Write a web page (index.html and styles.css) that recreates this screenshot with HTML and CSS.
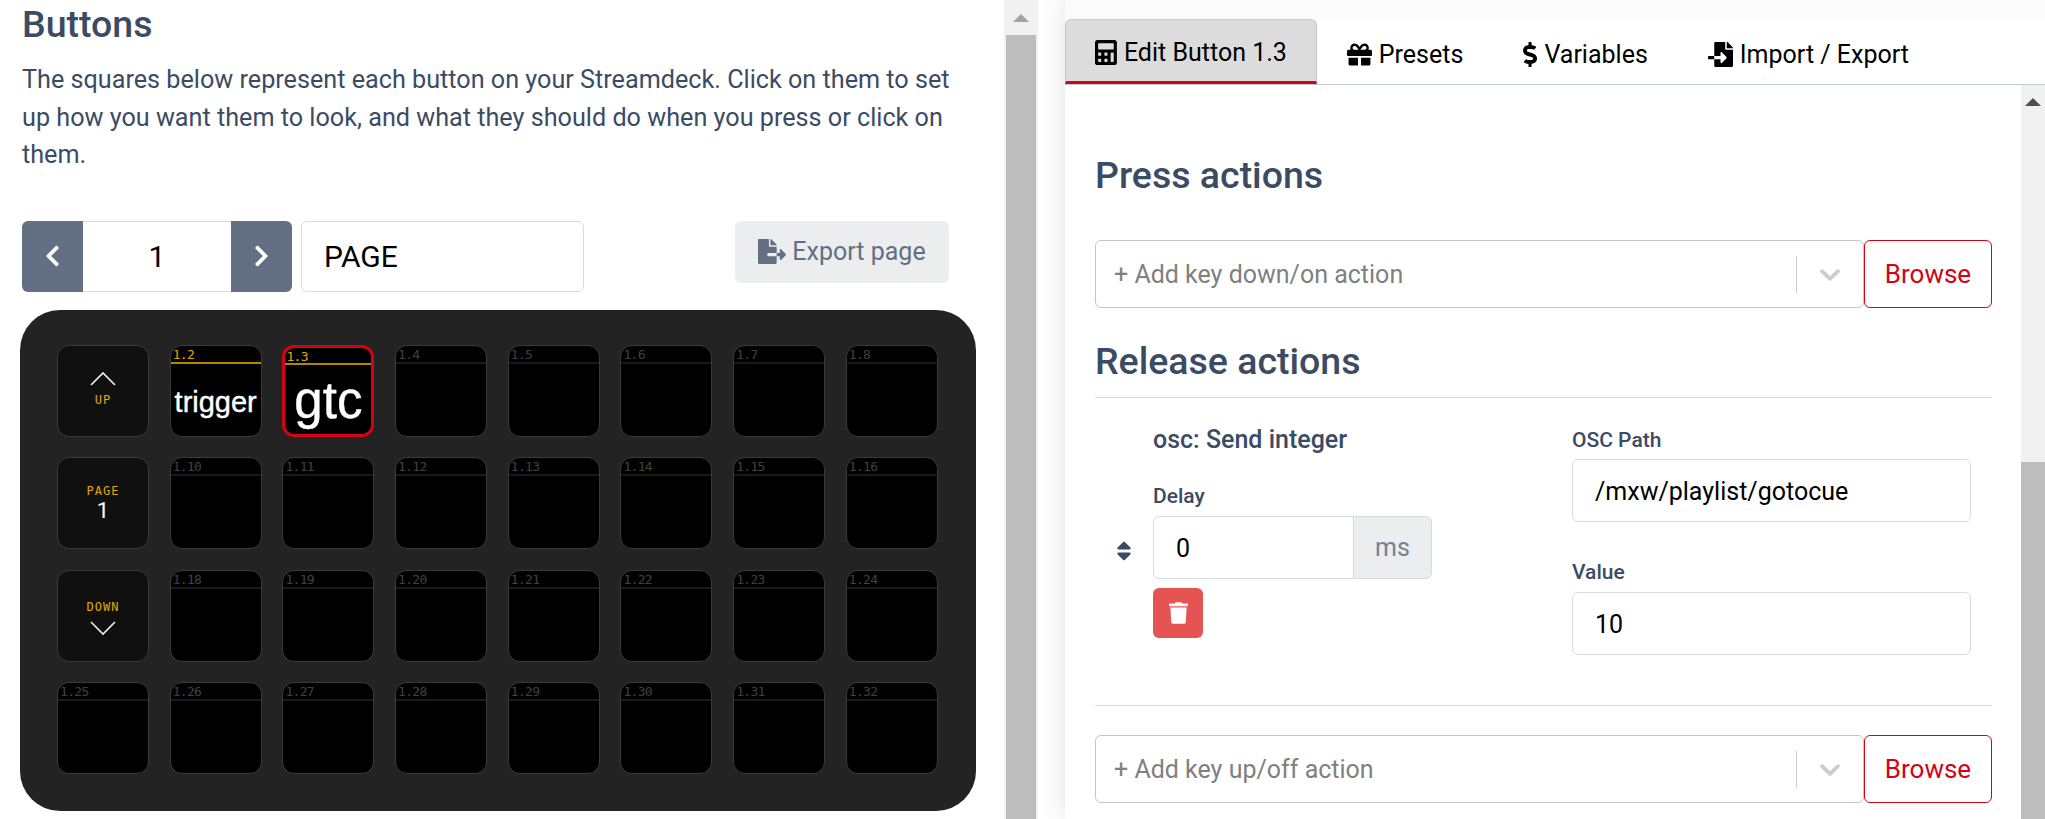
FILE: index.html
```html
<!DOCTYPE html>
<html lang="en">
  <head>
    <meta charset="UTF-8" />
    <title>Buttons</title>
    <link rel="stylesheet" href="styles.css">
  </head>

  <body>
    <section class="left">
      <h1>Buttons</h1>
      <p class="intro">The squares below represent each button on your Streamdeck. Click on them to set up how you want them to look, and what they should do when you press or click on them.</p>

      <div class="pager">
        <button class="page-btn"><svg viewBox="0 0 320 512"><path d="M34.52 239.03L228.87 44.69c9.37-9.37 24.57-9.37 33.94 0l22.67 22.67c9.36 9.36 9.38 24.52.04 33.9L131.49 256l154.02 154.75c9.34 9.38 9.32 24.54-.04 33.9l-22.67 22.67c-9.37 9.37-24.57 9.37-33.94 0L34.52 272.97c-9.37-9.37-9.37-24.57 0-33.94z"/></svg></button>
        <div class="page-num">1</div>
        <button class="page-btn"><svg viewBox="0 0 320 512"><path d="M285.476 272.971L91.132 467.314c-9.373 9.373-24.569 9.373-33.941 0l-22.667-22.667c-9.357-9.357-9.375-24.522-.04-33.901L188.505 256 34.484 101.255c-9.335-9.379-9.317-24.544.04-33.901l22.667-22.667c9.373-9.373 24.569-9.373 33.941 0L285.475 239.03c9.373 9.372 9.373 24.568.001 33.941z"/></svg></button>
        <div class="page-name">PAGE</div>
        <button class="export-btn"><svg viewBox="0 0 576 512"><path d="M384 121.9c0-6.3-2.5-12.4-7-16.9L279.1 7c-4.5-4.5-10.6-7-17-7H256v128h128zM571 308l-95.7-96.4c-10.1-10.1-27.4-3-27.4 11.3V288h-64v64h64v65.2c0 14.3 17.3 21.4 27.4 11.3L571 332c6.6-6.6 6.6-17.4 0-24zm-379 28v-32c0-8.8 7.2-16 16-16h176V160H248c-13.2 0-24-10.8-24-24V0H24C10.7 0 0 10.7 0 24v464c0 13.3 10.7 24 24 24h336c13.3 0 24-10.7 24-24V352H208c-8.8 0-16-7.2-16-16z"/></svg>Export page</button>
      </div>

      <div class="deck">
        <div class="key nav nav-up"><svg class="nav-arrow" viewBox="0 0 26 16"><polyline points="1,14 13,2 25,14"/></svg><span class="nav-label">UP</span></div>
        <div class="key on"><div class="key-head">1.2</div><div class="key-face trigger">trigger</div></div>
        <div class="key on selected"><div class="key-head">1.3</div><div class="key-face gtc">gtc</div></div>
        <div class="key"><div class="key-head">1.4</div></div>
        <div class="key"><div class="key-head">1.5</div></div>
        <div class="key"><div class="key-head">1.6</div></div>
        <div class="key"><div class="key-head">1.7</div></div>
        <div class="key"><div class="key-head">1.8</div></div>

        <div class="key nav"><span class="nav-label">PAGE</span><span class="nav-num">1</span></div>
        <div class="key"><div class="key-head">1.10</div></div>
        <div class="key"><div class="key-head">1.11</div></div>
        <div class="key"><div class="key-head">1.12</div></div>
        <div class="key"><div class="key-head">1.13</div></div>
        <div class="key"><div class="key-head">1.14</div></div>
        <div class="key"><div class="key-head">1.15</div></div>
        <div class="key"><div class="key-head">1.16</div></div>

        <div class="key nav nav-down"><span class="nav-label">DOWN</span><svg class="nav-arrow" viewBox="0 0 26 16"><polyline points="1,2 13,14 25,2"/></svg></div>
        <div class="key"><div class="key-head">1.18</div></div>
        <div class="key"><div class="key-head">1.19</div></div>
        <div class="key"><div class="key-head">1.20</div></div>
        <div class="key"><div class="key-head">1.21</div></div>
        <div class="key"><div class="key-head">1.22</div></div>
        <div class="key"><div class="key-head">1.23</div></div>
        <div class="key"><div class="key-head">1.24</div></div>

        <div class="key"><div class="key-head">1.25</div></div>
        <div class="key"><div class="key-head">1.26</div></div>
        <div class="key"><div class="key-head">1.27</div></div>
        <div class="key"><div class="key-head">1.28</div></div>
        <div class="key"><div class="key-head">1.29</div></div>
        <div class="key"><div class="key-head">1.30</div></div>
        <div class="key"><div class="key-head">1.31</div></div>
        <div class="key"><div class="key-head">1.32</div></div>
      </div>
    </section>

    <div class="scrollbar outer">
      <div class="scroll-up"></div>
      <div class="scroll-thumb"></div>
    </div>

    <section class="right">
      <nav class="tabs">
        <div class="tab active"><svg class="tab-icon" viewBox="0 0 448 512"><path d="M400 0H48C22.4 0 0 22.4 0 48v416c0 25.6 22.4 48 48 48h352c25.6 0 48-22.4 48-48V48c0-25.6-22.4-48-48-48zM128 435.2c0 6.4-6.4 12.8-12.8 12.8H76.8c-6.4 0-12.8-6.4-12.8-12.8v-38.4c0-6.4 6.4-12.8 12.8-12.8h38.4c6.4 0 12.8 6.4 12.8 12.8v38.4zm0-128c0 6.4-6.4 12.8-12.8 12.8H76.8c-6.4 0-12.8-6.4-12.8-12.8v-38.4c0-6.4 6.4-12.8 12.8-12.8h38.4c6.4 0 12.8 6.4 12.8 12.8v38.4zm128 128c0 6.4-6.4 12.8-12.8 12.8h-38.4c-6.4 0-12.8-6.4-12.8-12.8v-38.4c0-6.4 6.4-12.8 12.8-12.8h38.4c6.4 0 12.8 6.4 12.8 12.8v38.4zm0-128c0 6.4-6.4 12.8-12.8 12.8h-38.4c-6.4 0-12.8-6.4-12.8-12.8v-38.4c0-6.4 6.4-12.8 12.8-12.8h38.4c6.4 0 12.8 6.4 12.8 12.8v38.4zm128 128c0 6.4-6.4 12.8-12.8 12.8h-38.4c-6.4 0-12.8-6.4-12.8-12.8V268.8c0-6.4 6.4-12.8 12.8-12.8h38.4c6.4 0 12.8 6.4 12.8 12.8v166.4zm0-256c0 6.4-6.4 12.8-12.8 12.8H76.8c-6.4 0-12.8-6.4-12.8-12.8V76.8C64 70.4 70.4 64 76.8 64h294.4c6.4 0 12.8 6.4 12.8 12.8v102.4z"/></svg>Edit Button 1.3</div>
        <div class="tab"><svg class="tab-icon" viewBox="0 0 512 512"><path d="M32 448c0 17.7 14.3 32 32 32h160V320H32v128zm256 32h160c17.7 0 32-14.3 32-32V320H288v160zm192-320h-42.1c6.2-12.1 10.1-25.5 10.1-40 0-48.5-39.5-88-88-88-41.6 0-68.5 21.3-103 68.3-34.5-47-61.4-68.3-103-68.3-48.5 0-88 39.5-88 88 0 14.5 3.8 27.9 10.1 40H32c-17.7 0-32 14.3-32 32v80c0 8.8 7.2 16 16 16h480c8.8 0 16-7.2 16-16v-80c0-17.7-14.3-32-32-32zm-326.1 0c-22.1 0-40-17.9-40-40s17.9-40 40-40c19.9 0 34.6 3.3 86.1 80h-86.1zm206.1 0h-86.1c51.4-76.5 65.7-80 86.1-80 22.1 0 40 17.9 40 40s-17.9 40-40 40z"/></svg>Presets</div>
        <div class="tab"><svg class="tab-icon" viewBox="0 0 288 512"><path d="M209.2 233.4l-108-31.6C88.7 198.2 80 186.5 80 173.5c0-16.3 13.2-29.5 29.5-29.5h66.3c12.2 0 24.2 3.7 34.2 10.5 6.1 4.1 14.3 3.1 19.5-2l34.8-34c7.1-6.9 6.1-18.4-1.8-24.5C238 74.8 207.4 64.1 176 64V16c0-8.8-7.2-16-16-16h-32c-8.8 0-16 7.2-16 16v48h-2.5C45.8 64-5.4 118.7.5 183.6c4.2 46.1 39.4 83.6 83.8 96.6l102.5 30c12.5 3.7 21.2 15.3 21.2 28.3 0 16.3-13.2 29.5-29.5 29.5h-66.3C100 368 88 364.3 78 357.5c-6.1-4.1-14.3-3.1-19.5 2l-34.8 34c-7.1 6.9-6.1 18.4 1.8 24.5 24.5 19.2 55.1 29.9 86.5 30v48c0 8.8 7.2 16 16 16h32c8.8 0 16-7.2 16-16v-48.2c46.6-.9 90.3-28.6 105.7-72.7 21.5-61.6-14.6-124.8-72.5-141.7z"/></svg>Variables</div>
        <div class="tab"><svg class="tab-icon" viewBox="0 0 512 512"><path d="M16 288c-8.8 0-16 7.2-16 16v32c0 8.8 7.2 16 16 16h112v-64H16zm336-152V0H152c-13.3 0-24 10.7-24 24v264h127.99v-65.18c0-14.28 17.29-21.41 27.36-11.27l95.7 96.43c6.6 6.65 6.6 17.39 0 24.04l-95.7 96.42c-10.06 10.14-27.36 3.01-27.36-11.27V352H128v136c0 13.3 10.7 24 24 24h336c13.3 0 24-10.7 24-24V160H376c-13.2 0-24-10.8-24-24zm153-31L407.1 7c-4.5-4.5-10.6-7-17-7H384v128h128v-6.1c0-6.3-2.5-12.4-7-16.9z"/></svg>Import / Export</div>
      </nav>

      <div class="editor">
        <div class="editor-body">
          <h2 class="press">Press actions</h2>
          <div class="add-row">
            <div class="select">
              <span class="placeholder">+ Add key down/on action</span>
              <span class="select-sep"></span>
              <svg class="select-chevron" viewBox="0 0 20 20"><path d="M4.516 7.548c0.436-0.446 1.043-0.481 1.576 0l3.908 3.747 3.908-3.747c0.533-0.481 1.141-0.446 1.574 0 0.436 0.445 0.408 1.197 0 1.615-0.406 0.418-4.695 4.502-4.695 4.502-0.217 0.223-0.502 0.335-0.787 0.335s-0.57-0.112-0.789-0.335c0 0-4.287-4.084-4.695-4.502s-0.436-1.17 0-1.615z"/></svg>
            </div>
            <button class="browse">Browse</button>
          </div>

          <h2 class="release">Release actions</h2>

          <div class="action">
            <div class="handle"><svg viewBox="0 0 320 512"><path d="M41 288h238c21.4 0 32.1 25.9 17 41L177 448c-9.4 9.4-24.6 9.4-33.9 0L24 329c-15.1-15.1-4.4-41 17-41zm255-105L177 64c-9.4-9.4-24.6-9.4-33.9 0L24 183c-15.1 15.1-4.4 41 17 41h238c21.4 0 32.1-25.9 17-41z"/></svg></div>
            <div class="action-main">
              <div class="action-name">osc: Send integer</div>
              <label class="field-label delay-label">Delay</label>
              <div class="delay-group">
                <div class="input delay-input">0</div>
                <div class="addon">ms</div>
              </div>
              <button class="trash"><svg viewBox="0 0 448 512"><path d="M432 32H312l-9.4-18.7A24 24 0 0 0 281.1 0H166.8a23.72 23.72 0 0 0-21.4 13.3L136 32H16A16 16 0 0 0 0 48v32a16 16 0 0 0 16 16h416a16 16 0 0 0 16-16V48a16 16 0 0 0-16-16zM53.2 467a48 48 0 0 0 47.9 45h245.8a48 48 0 0 0 47.9-45L416 128H32z"/></svg></button>
            </div>
            <div class="action-options">
              <label class="field-label">OSC Path</label>
              <div class="input">/mxw/playlist/gotocue</div>
              <label class="field-label value-label">Value</label>
              <div class="input">10</div>
            </div>
          </div>

          <div class="add-row last">
            <div class="select">
              <span class="placeholder">+ Add key up/off action</span>
              <span class="select-sep"></span>
              <svg class="select-chevron" viewBox="0 0 20 20"><path d="M4.516 7.548c0.436-0.446 1.043-0.481 1.576 0l3.908 3.747 3.908-3.747c0.533-0.481 1.141-0.446 1.574 0 0.436 0.445 0.408 1.197 0 1.615-0.406 0.418-4.695 4.502-4.695 4.502-0.217 0.223-0.502 0.335-0.787 0.335s-0.57-0.112-0.789-0.335c0 0-4.287-4.084-4.695-4.502s-0.436-1.17 0-1.615z"/></svg>
            </div>
            <button class="browse">Browse</button>
          </div>
        </div>

        <div class="scrollbar inner">
          <div class="scroll-up"></div>
          <div class="scroll-thumb"></div>
        </div>
      </div>
    </section>
  </body>
</html>
```

FILE: styles.css
```css
html,
body {
  height: 819px;
  overflow: hidden;
}

body {
  margin: 0;
  display: flex;
  background-color: #fff;
  color: #3c4b64;
  font-family: Roboto, sans-serif;
}

button {
  font-family: inherit;
  border: 0;
  padding: 0;
}

svg {
  display: block;
  fill: currentColor;
}

/* left column */
.left {
  width: 1004px;
  flex-shrink: 0;
  box-sizing: border-box;
  padding: 2px 0 0 22px;
}

h1 {
  font-size: 37.5px;
  font-weight: 500;
  line-height: 44px;
  margin: 0 0 15px;
}

.intro {
  width: 930px;
  margin: 0 0 47px;
  font-size: 25.2px;
  line-height: 37.5px;
}

.pager {
  display: flex;
  align-items: flex-start;
  width: 927px;
}

.page-btn {
  width: 61px;
  height: 71px;
  background-color: #636f83;
  color: #fff;
  display: flex;
  align-items: center;
  justify-content: center;
}

.page-btn:first-child {
  border-radius: 6px 0 0 6px;
}

.page-btn:nth-child(3) {
  border-radius: 0 6px 6px 0;
  margin-right: 9px;
}

.page-btn svg {
  width: 15px;
  height: 24px;
}

.page-num,
.page-name {
  height: 71px;
  box-sizing: border-box;
  border: 1px solid #d8dbe0;
  display: flex;
  align-items: center;
  color: #000;
  font-size: 30px;
}

.page-num {
  width: 148px;
  border-width: 1px 0;
  justify-content: center;
}

.page-name {
  width: 283px;
  border-radius: 6px;
  padding-left: 22px;
}

.export-btn {
  margin-left: auto;
  width: 214px;
  height: 62px;
  background-color: #ebedef;
  color: #636f83;
  border-radius: 6px;
  font-size: 25px;
  display: flex;
  align-items: center;
  justify-content: center;
  gap: 6px;
}

.export-btn svg {
  width: 28px;
  height: 25px;
}

/* stream deck */
.deck {
  width: 956px;
  height: 501px;
  margin: 18px 0 0 -2px;
  box-sizing: border-box;
  padding: 35px 0 0 37px;
  background-color: #232323;
  border-radius: 40px;
  display: grid;
  grid-template-columns: repeat(8, 92px);
  grid-auto-rows: 92px;
  gap: 20.5px 20.7px;
}

.key {
  box-sizing: border-box;
  background-color: #000;
  border: 1px solid #3a3a3a;
  border-radius: 12px;
  overflow: hidden;
}

.key-head {
  height: 16px;
  border-bottom: 2px solid #1a1a1a;
  padding-left: 2px;
  color: #404040;
  font-family: "DejaVu Sans Mono", monospace;
  font-size: 13px;
  line-height: 17px;
  letter-spacing: -0.7px;
}

.key.on .key-head {
  color: #e0a800;
  border-bottom-color: #b38600;
}

.key-face {
  color: #fff;
  font-family: "Liberation Sans", sans-serif;
  text-align: center;
  white-space: nowrap;
  -webkit-text-stroke: 0.4px #fff;
}

.trigger {
  font-size: 29px;
  line-height: 76px;
}

.gtc {
  font-size: 51px;
  line-height: 72px;
}

.key.selected {
  border: 3px solid #d50215;
}

.key.selected .key-head {
  height: 15px;
  padding-left: 1px;
}

.key.nav {
  background-color: #101010;
  display: flex;
  flex-direction: column;
  align-items: center;
  justify-content: center;
  gap: 7px;
}

.key.nav-up {
  padding-bottom: 5px;
}

.key.nav-down {
  padding-top: 5px;
}

.nav-label {
  color: #e0a800;
  font-family: "DejaVu Sans Mono", monospace;
  font-size: 12px;
  line-height: 12px;
  letter-spacing: 1px;
}

.nav-num {
  color: #fff;
  font-size: 22px;
  line-height: 20px;
  margin-top: -3px;
}

.nav-arrow {
  width: 26px;
  height: 16px;
  fill: none;
  stroke: #eee;
  stroke-width: 1.6;
}

/* scrollbars */
.scrollbar {
  flex-shrink: 0;
  background-color: #f1f1f1;
  display: flex;
  flex-direction: column;
}

.scrollbar.outer {
  width: 34px;
}

.scrollbar.inner {
  width: 24px;
}

.scroll-up {
  flex-shrink: 0;
  display: flex;
  justify-content: center;
}

.scroll-up::before {
  content: "";
  width: 0;
  height: 0;
  border-left: 8px solid transparent;
  border-right: 8px solid transparent;
  border-bottom: 8px solid #a3a3a3;
}

.outer .scroll-up {
  height: 35px;
  align-items: center;
}

.inner .scroll-up {
  height: 377px;
  padding-top: 13px;
  box-sizing: border-box;
}

.inner .scroll-up::before {
  border-bottom-color: #505050;
}

.scroll-thumb {
  flex: 1;
  background-color: #bdbdbd;
}

.outer .scroll-thumb {
  margin: 0 2px;
}

/* right column */
.right {
  flex: 1;
  min-width: 0;
  margin-left: 27px;
  display: flex;
  flex-direction: column;
  box-shadow: 0 0 26px rgba(0, 0, 0, 0.12);
}

.tabs {
  display: flex;
  height: 85px;
  box-sizing: border-box;
  padding-top: 19px;
  border-bottom: 1px solid #c4c9d6;
  background: linear-gradient(#fbfbfb 19px, #fff 19px);
  color: #000;
}

.tab {
  height: 65px;
  box-sizing: border-box;
  padding: 6px 30px 0;
  display: flex;
  align-items: center;
  gap: 7px;
  font-size: 25px;
}

.tab.active {
  background-color: #dcdcdc;
  border: 1px solid #c4c9d6;
  border-bottom: 3px solid #d50215;
  border-radius: 6px 6px 0 0;
  padding: 4px 29px 0;
}

.tab-icon {
  height: 25px;
  width: auto;
}

.editor {
  flex: 1;
  display: flex;
  min-height: 0;
}

.editor-body {
  flex: 1;
  min-width: 0;
  padding: 68px 29px 0 30px;
}

h2 {
  font-size: 37.5px;
  font-weight: 500;
  line-height: 44px;
  margin: 0;
}

.press {
  margin-bottom: 43px;
}

.release {
  margin-top: 31px;
  padding-bottom: 14px;
  border-bottom: 1px solid #d8dbe0;
}

.add-row {
  display: flex;
  height: 68px;
}

.add-row.last {
  margin-top: 29px;
}

.select {
  flex: 1;
  box-sizing: border-box;
  border: 1px solid #c4c4c4;
  border-radius: 6px;
  padding-left: 18px;
  display: flex;
  align-items: center;
}

.placeholder {
  flex: 1;
  color: #808080;
  font-size: 25px;
}

.select-sep {
  width: 1px;
  height: 37px;
  background-color: #ccc;
}

.select-chevron {
  width: 34px;
  height: 34px;
  margin: 0 16px;
  color: #ccc;
}

.browse {
  width: 128px;
  box-sizing: border-box;
  border: 1px solid #d50215;
  border-radius: 6px;
  background-color: #fff;
  color: #d50215;
  font-size: 26px;
}

.action {
  display: flex;
  padding: 25px 0 50px;
  border-bottom: 1px solid #d8dbe0;
}

.handle {
  width: 58px;
  flex-shrink: 0;
  height: 232px;
  display: flex;
  align-items: flex-end;
  justify-content: center;
}

.handle svg {
  width: 16px;
  height: 24px;
  margin-bottom: 92px;
}

.action-main {
  width: 279px;
  margin-right: 140px;
}

.action-options {
  width: 399px;
}

.action-name,
.field-label {
  display: block;
  font-size: 21px;
  font-weight: 500;
  line-height: 30px;
  padding-top: 2px;
}

.action-name {
  font-size: 25px;
}

.field-label {
  margin-bottom: 4px;
}

.delay-label {
  margin-top: 24px;
  padding-top: 2px;
  margin-bottom: 5px;
}

.value-label {
  margin-top: 33px;
  margin-bottom: 5px;
}

.input {
  height: 63px;
  box-sizing: border-box;
  border: 1px solid #d8dbe0;
  border-radius: 6px;
  padding: 2px 0 0 22px;
  display: flex;
  align-items: center;
  color: #000;
  font-size: 25px;
}

.delay-group {
  display: flex;
  height: 63px;
  margin-bottom: 9px;
}

.delay-input {
  flex: 1;
  border-radius: 6px 0 0 6px;
}

.addon {
  width: 78px;
  box-sizing: border-box;
  background-color: #ebedef;
  border: 1px solid #d8dbe0;
  border-left: 0;
  border-radius: 0 6px 6px 0;
  color: #768192;
  font-size: 25px;
  display: flex;
  align-items: center;
  justify-content: center;
}

.trash {
  width: 50px;
  height: 50px;
  background-color: #e55353;
  color: #fff;
  border-radius: 6px;
  display: flex;
  align-items: center;
  justify-content: center;
}

.trash svg {
  width: 19px;
  height: 22px;
}
```
